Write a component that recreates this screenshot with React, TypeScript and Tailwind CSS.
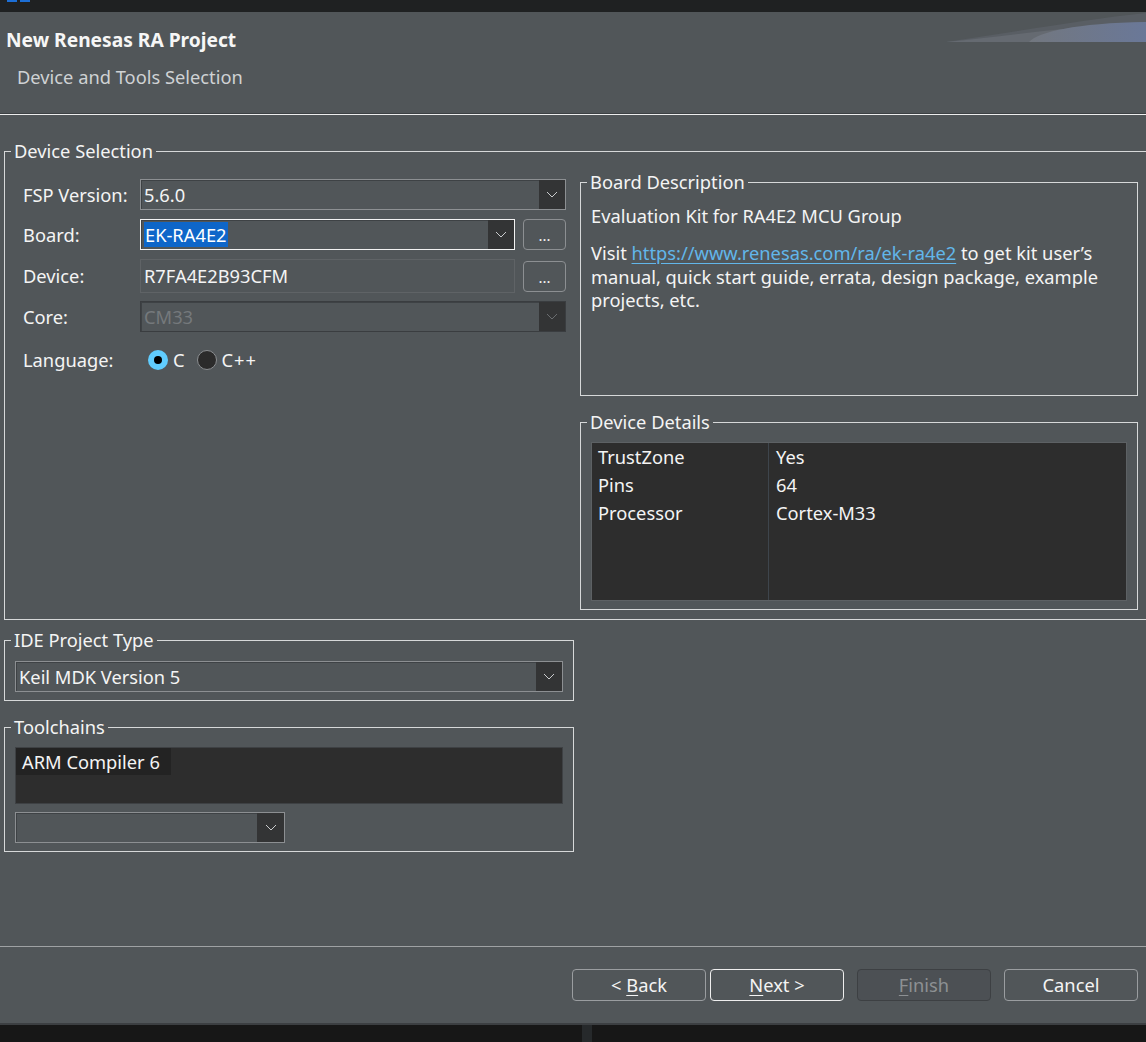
import type { ReactNode } from 'react';

const FONT = "font-['Noto_Sans',sans-serif]";

function Chevron({ dim = false }: { dim?: boolean }) {
  return (
    <svg width="12" height="7" viewBox="0 0 12 7" fill="none">
      <polyline points="1,1 6,6 11,1" stroke={dim ? '#6a6d70' : '#c9cbcd'} strokeWidth="1" />
    </svg>
  );
}

type ComboProps = {
  children?: ReactNode;
  className?: string;
  variant?: 'normal' | 'focused' | 'disabled';
  arrowW?: string;
};

function Combo({ children, className = '', variant = 'normal', arrowW = 'w-[26px]' }: ComboProps) {
  const border =
    variant === 'focused'
      ? 'border-[#f2f2f2]'
      : variant === 'disabled'
      ? 'border-[#3a3d40]'
      : 'border-[#8c8f92]';
  return (
    <div className={`flex h-[31px] border ${border} bg-[#515659] ${className}`}>
      <div
        className={`flex flex-1 items-center pl-[3px] shadow-[inset_1px_1px_0_#3e4245] ${
          variant === 'disabled' ? 'text-[#75797c]' : 'text-[#f4f4f4]'
        }`}
      >
        {children}
      </div>
      <div className={`flex ${arrowW} items-center justify-center bg-[#333435]`}>
        <Chevron dim={variant === 'disabled'} />
      </div>
    </div>
  );
}

function DotsButton() {
  return (
    <button className="flex h-[31px] w-[43px] items-end justify-center rounded-[4px] border border-[#8c8f92] pb-[6px] text-[15px] leading-none text-[#f4f4f4]">
      ...
    </button>
  );
}

function Group({
  title,
  className = '',
  inner = '',
  children,
}: {
  title: string;
  className?: string;
  inner?: string;
  children: ReactNode;
}) {
  return (
    <fieldset className={`border border-[#d6d8d9] ${className}`}>
      <legend className="ml-[6px] px-[3px] text-[18.3px] leading-[22px] text-[#f4f4f4]">{title}</legend>
      <div className={inner}>{children}</div>
    </fieldset>
  );
}

function Label({ children }: { children: ReactNode }) {
  return <div className="w-[117px] shrink-0 text-[18.3px] text-[#f4f4f4]">{children}</div>;
}

function WizardButton({
  children,
  tone = 'normal',
}: {
  children: ReactNode;
  tone?: 'normal' | 'default' | 'disabled';
}) {
  const cls =
    tone === 'default'
      ? 'border-[#eeeeee] text-[#f4f4f4] bg-[#515659]'
      : tone === 'disabled'
      ? 'border-[#3d4043] text-[#8d9093] bg-[#4c5054]'
      : 'border-[#9a9da0] text-[#f4f4f4] bg-[#515659]';
  return (
    <button
      className={`flex h-[32px] w-[134px] items-center justify-center rounded-[4px] border text-[18.3px] ${cls}`}
    >
      {children}
    </button>
  );
}

export default function App() {
  return (
    <div className={`flex h-[1042px] w-[1146px] flex-col overflow-hidden bg-[#171717] ${FONT}`}>
      {/* window top strip */}
      <div className="flex h-[12px] shrink-0 items-start gap-[3px] bg-[#1f2122] pl-[7px]">
        <div className="h-[2px] w-[10px] bg-[#1d6fd6]" />
        <div className="h-[2px] w-[10px] bg-[#1d6fd6]" />
      </div>

      {/* dialog */}
      <div className="flex h-[1013px] shrink-0 flex-col border-b-2 border-[#3c3f42] bg-[#515659]">
        {/* header */}
        <div className="relative h-[101px] shrink-0 pl-[6px] pt-[16px]">
          <svg
            className="absolute right-0 top-0"
            width="200"
            height="30"
            viewBox="0 0 200 30"
          >
            <defs>
              <linearGradient id="sw" x1="0" y1="0" x2="1" y2="0">
                <stop offset="0" stopColor="#72777f" />
                <stop offset="1" stopColor="#6a7898" />
              </linearGradient>
            </defs>
            <path d="M0 30 C 70 20, 140 7, 200 1 L200 30 Z" fill="#595e64" />
            <path d="M0 30 C 60 24, 120 15, 200 10 L200 30 Z" fill="#656a71" />
            <path d="M83 30 C 92 20, 130 11, 200 10 L200 30 Z" fill="url(#sw)" />
          </svg>
          <div className="text-[19.2px] font-bold leading-[24px] text-[#f6f6f6]">New Renesas RA Project</div>
          <div className="mt-[13px] pl-[11px] text-[18.3px] leading-[24px] text-[#cfd2d4]">
            Device and Tools Selection
          </div>
        </div>
        <div className="h-px shrink-0 bg-[#3d4144]" />
        <div className="h-px shrink-0 bg-[#eceded]" />

        {/* body */}
        <div className="flex flex-1 flex-col pl-[4px]">
          <Group title="Device Selection" className="mt-[25px] border-r-0" inner="flex gap-[14px] pl-[18px] pt-[9px] pb-[9px]">
            {/* left column */}
            <div className="mt-[8px] flex w-[543px] flex-col">
              <div className="flex h-[31px] items-center">
                <Label>FSP Version:</Label>
                <Combo className="w-[426px]">
                  <span className="text-[18.3px]">5.6.0</span>
                </Combo>
              </div>
              <div className="mt-[9px] flex h-[31px] items-center">
                <Label>Board:</Label>
                <Combo className="w-[375px]" variant="focused">
                  <span className="bg-[#0e66c9] px-[1px] text-[18.3px] leading-[25px] text-white">EK-RA4E2</span>
                </Combo>
                <div className="ml-[8px]">
                  <DotsButton />
                </div>
              </div>
              <div className="mt-[9px] flex h-[34px] items-center">
                <Label>Device:</Label>
                <div className="flex h-[34px] w-[375px] items-center border border-[#5f6366] pl-[3px] text-[18.3px] text-[#f4f4f4]">
                  R7FA4E2B93CFM
                </div>
                <div className="ml-[8px]">
                  <DotsButton />
                </div>
              </div>
              <div className="mt-[8px] flex h-[31px] items-center">
                <Label>Core:</Label>
                <Combo className="w-[426px]" variant="disabled">
                  <span className="text-[18.3px]">CM33</span>
                </Combo>
              </div>
              <div className="mt-[18px] flex h-[20px] items-center">
                <Label>Language:</Label>
                <div className="ml-[8px] flex items-center text-[18.3px] text-[#f4f4f4]">
                  <span className="flex h-[20px] w-[20px] items-center justify-center rounded-full bg-[#60cdff]">
                    <span className="h-[8px] w-[8px] rounded-full bg-black" />
                  </span>
                  <span className="ml-[5px]">C</span>
                  <span className="ml-[12px] h-[20px] w-[20px] rounded-full border border-[#8b8e91] bg-[#2b2b2b]" />
                  <span className="ml-[5px] tracking-[1px]">C++</span>
                </div>
              </div>
            </div>

            {/* right column */}
            <div className="flex w-[558px] flex-col">
              <Group
                title="Board Description"
                className="h-[225px]"
                inner="px-[10px] text-[18.3px] text-[#f4f4f4]"
              >
                <div className="pt-[11px] leading-[24px]">Evaluation Kit for RA4E2 MCU Group</div>
                <div className="mt-[13px] leading-[23.5px]">
                  Visit{' '}
                  <span className="text-[#62b6ea] underline underline-offset-[3px]">
                    https://www.renesas.com/ra/ek-ra4e2
                  </span>{' '}
                  to get kit user’s manual, quick start guide, errata, design package, example projects, etc.
                </div>
              </Group>
              <Group title="Device Details" className="mt-[15px]" inner="px-[10px] pb-[8px]">
                <div className="mt-[9px] flex h-[159px] border border-[#5d6164] bg-[#2d2d2d] text-[18.3px] text-[#f4f4f4]">
                  <div className="w-[177px] border-r border-[#3e454c] pl-[6px]">
                    <div className="flex h-[28px] items-center">TrustZone</div>
                    <div className="flex h-[28px] items-center">Pins</div>
                    <div className="flex h-[28px] items-center">Processor</div>
                  </div>
                  <div className="flex-1 pl-[7px]">
                    <div className="flex h-[28px] items-center">Yes</div>
                    <div className="flex h-[28px] items-center">64</div>
                    <div className="flex h-[28px] items-center">Cortex-M33</div>
                  </div>
                </div>
              </Group>
            </div>
          </Group>

          <Group title="IDE Project Type" className="mt-[9px] w-[570px]" inner="px-[10px] pb-[8px]">
            <Combo className="mt-[10px] w-[548px]">
              <span className="text-[18.3px]">Keil MDK Version 5</span>
            </Combo>
          </Group>

          <Group title="Toolchains" className="mt-[15px] w-[570px]" inner="px-[10px] pb-[8px]">
            <div className="mt-[9px] h-[57px] border border-[#3e4144] bg-[#2d2d2d]">
              <div className="flex h-[27px] w-[155px] items-center bg-[#232323] pl-[6px] text-[18.3px] text-[#f4f4f4]">
                ARM Compiler 6
              </div>
            </div>
            <Combo className="mt-[8px] w-[270px]" arrowW="w-[27px]" />
          </Group>

          <div className="flex-1" />
        </div>

        {/* footer */}
        <div className="flex shrink-0 justify-end border-t border-[#9fa2a4] pb-[22px] pr-[8px] pt-[22px]">
          <WizardButton>
            &lt;&nbsp;<span className="underline underline-offset-[3px]">B</span>ack
          </WizardButton>
          <div className="ml-[4px]">
            <WizardButton tone="default">
              <span className="underline underline-offset-[3px]">N</span>ext &gt;
            </WizardButton>
          </div>
          <div className="ml-[13px]">
            <WizardButton tone="disabled">
              <span className="underline underline-offset-[3px]">F</span>inish
            </WizardButton>
          </div>
          <div className="ml-[13px]">
            <WizardButton>Cancel</WizardButton>
          </div>
        </div>
      </div>

      {/* below the dialog */}
      <div className="flex flex-1 bg-[#171717]">
        <div className="ml-[582px] w-[10px] bg-[#26292b]" />
      </div>
    </div>
  );
}
